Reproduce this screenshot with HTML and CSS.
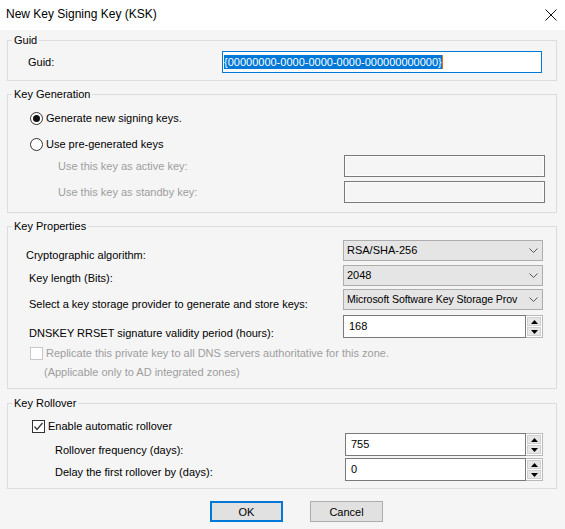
FILE: index.html
```html
<!DOCTYPE html>
<html lang="en">
<head>
<meta charset="utf-8">
<title>New Key Signing Key (KSK)</title>
<link rel="stylesheet" href="styles.css">
</head>
<body>
<div class="dialog">
  <div class="titlebar">
    <span class="title">New Key Signing Key (KSK)</span>
    <svg class="close" width="12" height="12" viewBox="0 0 12 12"><path d="M0.5 0.5 L11.5 11.5 M11.5 0.5 L0.5 11.5" stroke="#111" stroke-width="1" fill="none"/></svg>
  </div>
  <div class="main">
    <fieldset class="group g-guid">
      <legend>Guid</legend>
      <div class="row guid-row">
        <span class="lbl guid-lbl">Guid:</span>
        <div class="guid-input"><span class="sel">{00000000-0000-0000-0000-000000000000}</span><span class="caret"></span></div>
      </div>
    </fieldset>

    <fieldset class="group g-gen">
      <legend>Key Generation</legend>
      <div class="radios">
        <div class="radio-row"><span class="radio checked"></span><span>Generate new signing keys.</span></div>
        <div class="radio-row"><span class="radio"></span><span>Use pre-generated keys</span></div>
      </div>
      <div class="keyrows">
        <div class="key-row"><span class="lbl disabled key-lbl">Use this key as active key:</span><div class="key-input"></div></div>
        <div class="key-row"><span class="lbl disabled key-lbl">Use this key as standby key:</span><div class="key-input"></div></div>
      </div>
    </fieldset>

    <fieldset class="group g-props">
      <legend>Key Properties</legend>
      <div class="prop-row r1">
        <span class="lbl prop-lbl l1">Cryptographic algorithm:</span>
        <div class="combo"><span>RSA/SHA-256</span><svg class="chev" width="9" height="6" viewBox="0 0 9 6"><path d="M0.5 0.5 L4.5 4.5 L8.5 0.5" stroke="#555" fill="none"/></svg></div>
      </div>
      <div class="prop-row r2">
        <span class="lbl prop-lbl l2">Key length (Bits):</span>
        <div class="combo"><span>2048</span><svg class="chev" width="9" height="6" viewBox="0 0 9 6"><path d="M0.5 0.5 L4.5 4.5 L8.5 0.5" stroke="#555" fill="none"/></svg></div>
      </div>
      <div class="prop-row r3">
        <span class="lbl prop-lbl l3">Select a key storage provider to generate and store keys:</span>
        <div class="combo"><span class="provider">Microsoft Software Key Storage Prov</span><svg class="chev" width="9" height="6" viewBox="0 0 9 6"><path d="M0.5 0.5 L4.5 4.5 L8.5 0.5" stroke="#555" fill="none"/></svg></div>
      </div>
      <div class="prop-row r4">
        <span class="lbl prop-lbl l4">DNSKEY RRSET signature validity period (hours):</span>
        <div class="spin prop-spin">
          <div class="spin-text">168</div>
          <div class="spin-btns">
            <div class="spin-btn"><svg width="7" height="4" viewBox="0 0 7 4"><path d="M3.5 0 L7 4 L0 4 Z" fill="#000"/></svg></div>
            <div class="spin-btn"><svg width="7" height="4" viewBox="0 0 7 4"><path d="M0 0 L7 0 L3.5 4 Z" fill="#000"/></svg></div>
          </div>
        </div>
      </div>
      <div class="check-row repl">
        <span class="check disabled-box"></span>
        <span class="disabled">Replicate this private key to all DNS servers authoritative for this zone.</span>
      </div>
      <div class="note disabled">(Applicable only to AD integrated zones)</div>
    </fieldset>

    <fieldset class="group g-roll">
      <legend>Key Rollover</legend>
      <div class="check-row auto">
        <span class="check checked"><svg width="11" height="11" viewBox="0 0 11 11"><path d="M1.5 5.5 L4 8.5 L9.5 2" stroke="#333" stroke-width="1.2" fill="none"/></svg></span>
        <span>Enable automatic rollover</span>
      </div>
      <div class="roll-row rr1">
        <span class="lbl roll-lbl rl1">Rollover frequency (days):</span>
        <div class="spin roll-spin">
          <div class="spin-text">755</div>
          <div class="spin-btns">
            <div class="spin-btn"><svg width="7" height="4" viewBox="0 0 7 4"><path d="M3.5 0 L7 4 L0 4 Z" fill="#000"/></svg></div>
            <div class="spin-btn"><svg width="7" height="4" viewBox="0 0 7 4"><path d="M0 0 L7 0 L3.5 4 Z" fill="#000"/></svg></div>
          </div>
        </div>
      </div>
      <div class="roll-row rr2">
        <span class="lbl roll-lbl rl2">Delay the first rollover by (days):</span>
        <div class="spin roll-spin">
          <div class="spin-text">0</div>
          <div class="spin-btns">
            <div class="spin-btn"><svg width="7" height="4" viewBox="0 0 7 4"><path d="M3.5 0 L7 4 L0 4 Z" fill="#000"/></svg></div>
            <div class="spin-btn"><svg width="7" height="4" viewBox="0 0 7 4"><path d="M0 0 L7 0 L3.5 4 Z" fill="#000"/></svg></div>
          </div>
        </div>
      </div>
    </fieldset>

    <div class="buttons">
      <button class="btn default">OK</button>
      <button class="btn">Cancel</button>
    </div>
  </div>
</div>
</body>
</html>
```
FILE: styles.css
```css
html, body {
  margin: 0;
  padding: 0;
  background: #f5f5f5;
}
body {
  width: 565px;
  height: 529px;
  overflow: hidden;
  font-family: "Liberation Sans", Arial, sans-serif;
  font-size: 11px;
  line-height: 13px;
  color: #000;
}
.titlebar {
  height: 30px;
  background: #fff;
  display: flex;
  align-items: center;
  justify-content: space-between;
  padding: 0 8px 2px 6px;
  box-sizing: border-box;
}
.title {
  font-size: 12px;
}
.close {
  display: block;
  margin-top: 1px;
}
.main {
  padding: 4px 8px 0 7px;
}
.group {
  margin: 0 0 7px 0;
  padding: 0;
  border: 1px solid #dcdcdc;
  min-width: 0;
}
.group legend {
  margin-left: 4px;
  padding: 0 2px;
  line-height: 13px;
}
.lbl { display: block; white-space: nowrap; }
.disabled { color: #9d9d9d; }

/* Guid */
.g-guid { padding: 4px 0 7px; }
.guid-row { display: flex; align-items: center; height: 22px; }
.guid-lbl { padding-left: 20px; padding-top: 1px; }
.guid-input {
  margin-left: auto;
  margin-right: 14px;
  width: 320px;
  height: 22px;
  box-sizing: border-box;
  border: 1px solid #0078d7;
  background: #fff;
  display: flex;
  align-items: center;
  padding-left: 1px;
}
.sel {
  background: #0078d7;
  color: #fff;
  line-height: 14px;
}
.caret {
  display: inline-block;
  width: 1px;
  height: 14px;
  background: #e07020;
}

/* Key generation */
.g-gen { padding: 6px 0 9px; }
.radios { display: flex; flex-direction: column; gap: 4px; }
.radio-row { display: flex; align-items: center; height: 22px; padding-left: 22px; gap: 3px; }
.radio {
  width: 13px;
  height: 13px;
  box-sizing: border-box;
  border: 1px solid #333;
  border-radius: 50%;
  background: #fff;
  display: flex;
  align-items: center;
  justify-content: center;
}
.radio.checked::after {
  content: "";
  width: 7px;
  height: 7px;
  border-radius: 50%;
  background: #111;
}
.keyrows { display: flex; flex-direction: column; gap: 4px; }
.key-row { display: flex; align-items: center; height: 22px; }
.key-lbl { padding-left: 50px; padding-top: 1px; }
.key-input {
  margin-left: auto;
  margin-right: 11px;
  width: 201px;
  height: 22px;
  box-sizing: border-box;
  border: 1px solid #7a7a7a;
  box-shadow: inset 0 0 0 1px #fcfcfc;
  background: #f5f5f5;
}

/* Key properties */
.g-props { padding: 7px 0 9px; }
.prop-row { display: flex; align-items: flex-start; }
.r2 { margin-top: 3px; }
.r3 { margin-top: 3px; }
.r4 { margin-top: 4px; }
.prop-lbl { padding-left: 21px; }
.l1 { padding-left: 18px; padding-top: 9px; }
.l2 { padding-top: 7px; }
.l3 { padding-top: 9px; }
.l4 { padding-top: 12px; }
.combo {
  margin-left: auto;
  margin-right: 13px;
  width: 200px;
  height: 21px;
  box-sizing: border-box;
  border: 1px solid #adadad;
  background: #e5e5e5;
  display: flex;
  align-items: center;
  justify-content: space-between;
  padding: 0 4px 0 3px;
}
.provider { white-space: nowrap; font-size: 10.6px; letter-spacing: -0.1px; }
.chev { display: block; flex: none; }
.spin { display: flex; height: 23px; }
.prop-spin { margin-left: auto; margin-right: 13px; width: 200px; }
.spin-text {
  flex: 1;
  box-sizing: border-box;
  border: 1px solid #7a7a7a;
  background: #fff;
  padding-left: 5px;
  display: flex;
  align-items: center;
}
.spin-btns {
  width: 17px;
  display: flex;
  flex-direction: column;
  box-sizing: border-box;
  border: 1px solid #b9b9b9;
  border-left: none;
  background: #fff;
  padding: 1px;
  gap: 1px;
}
.spin-btn {
  flex: 1;
  background: #e6e6e6;
  border: 1px solid #d0d0d0;
  display: flex;
  align-items: center;
  justify-content: center;
}
.spin-btn svg { display: block; }
.check-row { display: flex; align-items: center; gap: 3px; }
.repl { margin-top: 7px; padding-left: 22px; height: 13px; }
.check {
  width: 13px;
  height: 13px;
  box-sizing: border-box;
  border: 1px solid #333;
  background: #fff;
  display: flex;
  align-items: center;
  justify-content: center;
  flex: none;
}
.check svg { display: block; }
.disabled-box { border-color: #c8c8c8; }
.note { margin-top: 6px; padding-left: 36px; }

/* Key rollover */
.g-roll { margin-top: 8px; padding: 10px 0 7px; }
.auto { padding-left: 24px; height: 13px; gap: 3px; }
.roll-row { display: flex; align-items: flex-start; }
.rr1 { margin-top: 0; }
.rr2 { margin-top: 1px; }
.roll-lbl { padding-left: 47px; }
.rl1 { padding-top: 11px; }
.rl2 { padding-top: 8px; }
.roll-spin { margin-left: auto; margin-right: 13px; width: 198px; height: 23px; }

/* buttons */
.buttons {
  display: flex;
  gap: 27px;
  padding-left: 203px;
  margin-top: 12px;
}
.btn {
  width: 73px;
  height: 21px;
  box-sizing: border-box;
  border: 1px solid #adadad;
  background: #e1e1e1;
  font-family: "Liberation Sans", Arial, sans-serif;
  font-size: 11px;
  color: #000;
  padding: 0;
  margin: 0;
}
.btn.default {
  border: 2px solid #0078d7;
}
```
